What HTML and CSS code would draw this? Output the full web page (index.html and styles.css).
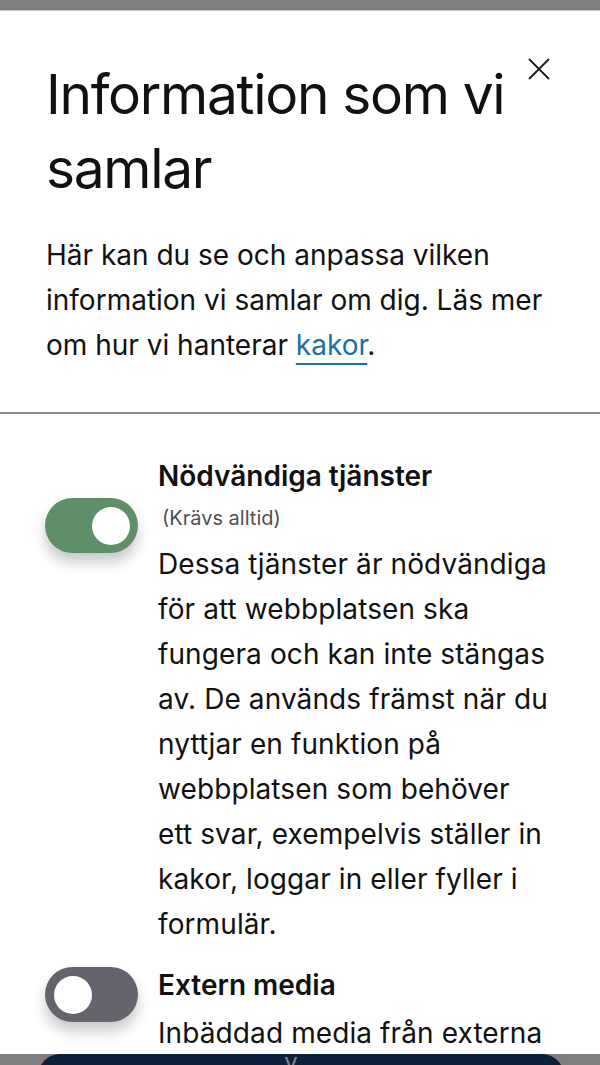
FILE: index.html
```html
<!DOCTYPE html>
<html lang="sv">
<head>
<meta charset="utf-8">
<link rel="stylesheet" href="styles.css">
</head>
<body>
<div class="backdrop">
  <div class="page-button"><span class="page-button-text">y</span></div>
</div>
<div class="modal">
  <header class="modal-head">
    <h1 class="modal-title">Information som vi samlar</h1>
    <button class="close" aria-label="Stäng">
      <svg width="22" height="22" viewBox="0 0 22 22"><path d="M1 1 L21 21 M21 1 L1 21" stroke="#1a1a1a" stroke-width="1.8" fill="none"/></svg>
    </button>
  </header>
  <p class="intro">Här kan du se och anpassa vilken information vi samlar om dig. Läs mer om hur vi hanterar <a href="#" class="link">kakor</a>.</p>
  <hr class="sep">
  <div class="items">
    <div class="item">
      <div class="toggle on"><span class="knob"></span></div>
      <div class="item-body">
        <h2 class="item-title">Nödvändiga tjänster</h2>
        <div class="item-note">(Krävs alltid)</div>
        <p class="item-text">Dessa tjänster är nödvändiga för att webbplatsen ska fungera och kan inte stängas av. De används främst när du nyttjar en funktion på webbplatsen som behöver ett svar, exempelvis ställer in kakor, loggar in eller fyller i formulär.</p>
      </div>
    </div>
    <div class="item">
      <div class="toggle off"><span class="knob"></span></div>
      <div class="item-body">
        <h2 class="item-title">Extern media</h2>
        <p class="item-text">Inbäddad media från externa källor, till exempel videor och kartor.</p>
      </div>
    </div>
  </div>
</div>
</body>
</html>
```

FILE: styles.css
```css
html, body {
  margin: 0;
  padding: 0;
  height: 1065px;
  overflow: hidden;
  background: #7f7f7f;
  font-family: Inter, "Noto Sans", sans-serif;
  color: #111;
}
.backdrop {
  position: absolute;
  left: 0; right: 0; bottom: 0;
  height: 20px;
}
.page-button {
  position: absolute;
  left: 38px; right: 36px; top: 9px;
  height: 40px;
  background: #0c1f3b;
  border-radius: 22px 22px 0 0;
  text-align: center;
  overflow: hidden;
}
.page-button-text {
  display: inline-block;
  color: #7d8593;
  font-size: 24px;
  line-height: 24px;
  margin-top: -12px;
  margin-left: -20px;
}
.modal {
  position: absolute;
  left: 0; right: 0; top: 10px;
  height: 1044px;
  background: #fff;
  overflow: hidden;
  border-top: 1px solid #c8c8c8;
  box-sizing: border-box;
}
.modal-head {
  display: flex;
  align-items: flex-start;
  padding: 46px 50px 0 46px;
}
.modal-title {
  margin: 0;
  flex: 1;
  font-weight: 400;
  font-size: 55px;
  line-height: 74px;
  letter-spacing: -1.3px;
}
.close {
  background: none;
  border: 0;
  padding: 0;
  margin: 1px 0 0 0;
  width: 22px;
  height: 22px;
  cursor: pointer;
}
.intro {
  margin: 28px 46px 0 46px;
  font-size: 28px;
  line-height: 45px;
  letter-spacing: 0;
}
.link {
  color: #1d6fa5;
  text-decoration: underline;
  text-decoration-thickness: 2px;
  text-underline-offset: 8px;
}
.sep {
  margin: 44px 0 0 0;
  border: 0;
  height: 2px;
  background: #8a8a8a;
}
.items {
  padding: 44px 51px 0 45px;
  display: flex;
  flex-direction: column;
  gap: 20px;
}
.item {
  display: flex;
  gap: 20px;
}
.toggle {
  flex: none;
  width: 93px;
  height: 55px;
  border-radius: 28px;
  display: flex;
  align-items: center;
  padding: 0 8px;
  box-sizing: border-box;
  box-shadow: 0 9px 14px rgba(0,0,0,0.22);
}
.toggle.on {
  background: #5e8f69;
  justify-content: flex-end;
  margin-top: 40px;
}
.toggle.off {
  background: #64646c;
  justify-content: flex-start;
  padding-left: 9px;
}
.knob {
  width: 38px;
  height: 38px;
  border-radius: 50%;
  background: #fff;
}
.item-body {
  flex: 1;
}
.item-title {
  margin: 0;
  font-size: 28px;
  font-weight: 600;
  line-height: 36px;
  letter-spacing: 0;
}
.item-note {
  margin: 8px 0 3px 4px;
  font-size: 20px;
  color: #4f4f4f;
  line-height: 32px;
}
.item-text {
  margin: 8px 0 0 0;
  font-size: 28px;
  line-height: 45px;
  letter-spacing: 0.1px;
}
```
